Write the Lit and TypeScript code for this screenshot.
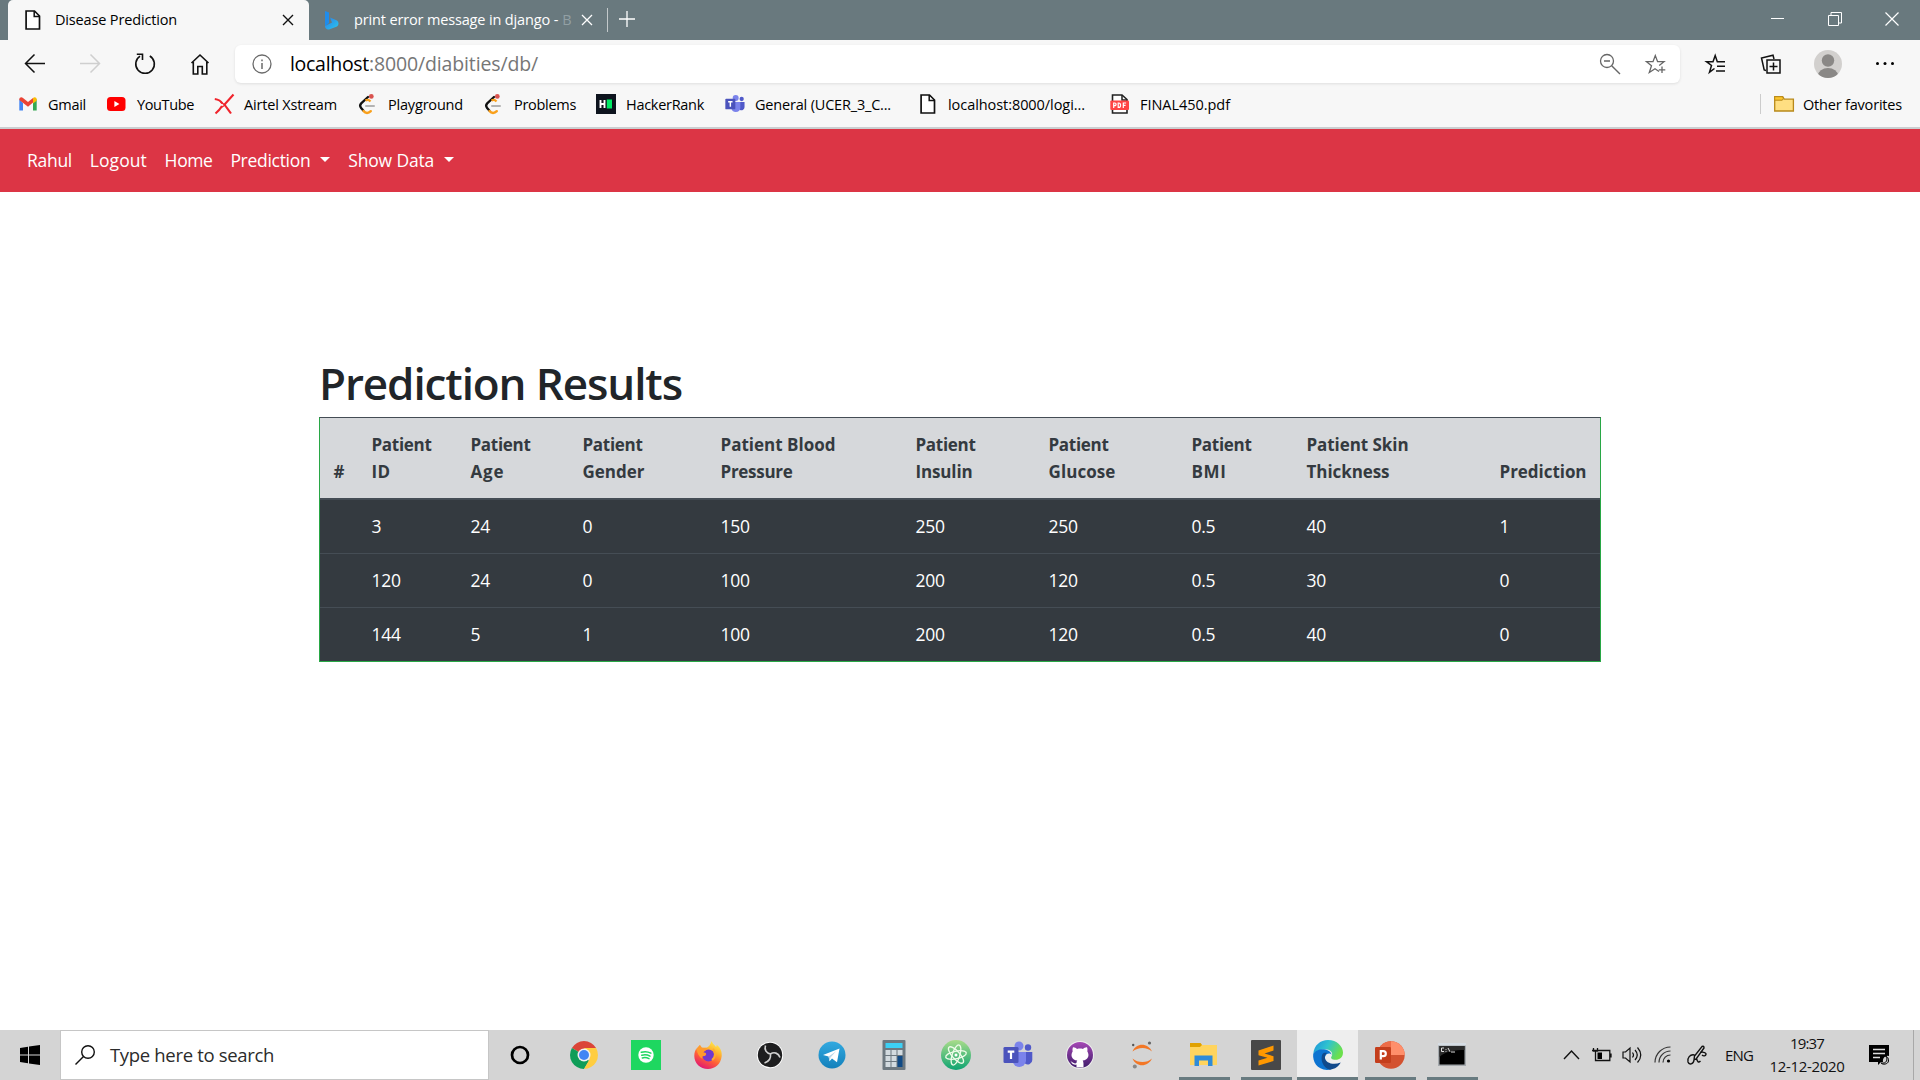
import { LitElement, html, svg, css } from "lit";
import { customElement } from "lit/decorators.js";

const icon = (w: number, h: number, body: unknown, vb?: string) =>
  html`<svg class="ico" width=${w} height=${h} viewBox=${vb ?? `0 0 ${w} ${h}`}>${body}</svg>`;

// Text set to a known advance width through letter spacing.
const fit = (text: string, w: number, cls = "") =>
  html`<span class="fit ${cls}" data-w=${w}>${text}</span>`;

const fileIcon = () =>
  icon(20, 20, svg`<path d="M3.100 1h8.400l5 5v13H3.100z" fill="#fff" stroke="#111" stroke-width="1.700"/><path d="M11.200 1v5.400h5.300" fill="none" stroke="#111" stroke-width="1.500"/>`);

const leetIcon = () =>
  icon(20, 20, svg`<path d="M10 3 3.200 9.400c-1.300 1.400-1.300 3.200-.1 4.600l2.200 2.600" fill="none" stroke="#111" stroke-width="2.300" stroke-linecap="round"/><path d="M5.500 17c2 2.600 5 2.600 7.300.2" fill="none" stroke="#f9a01b" stroke-width="2.400" stroke-linecap="round"/><path d="M7.500 6.500c1.600-1 3.400-.9 5 .9" fill="none" stroke="#f9a01b" stroke-width="2.200"/><path d="M8 12h8" stroke="#b3b3b3" stroke-width="2" stroke-linecap="round"/><circle cx="13.300" cy="2.400" r="2.400" fill="#d9534f"/>`);

const teams = (s: number) =>
  icon(s, s, svg`<circle cx="25" cy="7.500" r="3.200" fill="#5059c9"/><path d="M22 12h7.300v8a4.500 4.500 0 0 1-7.300 3.500z" fill="#5059c9"/><circle cx="16" cy="6" r="4.500" fill="#7b83eb"/><path d="M9.500 12h13.500v9a6.800 6.800 0 0 1-13.500 0z" fill="#7b83eb"/><rect x=".5" y="7" width="15" height="16" rx="1.300" fill="#4b53bc"/><path d="M4.700 11.700h6.600M8 11.700v7.300" stroke="#fff" stroke-width="2.200"/>`, "0 0 30 30");

const bookmarks = [
  { w: 89, tw: 37, t: "Gmail", i: icon(20, 20, svg`<path d="M1.300 5v11.600H5V9z" fill="#4285f4"/><path d="M15 9v7.600h3.700V5z" fill="#34a853"/><path d="M1.300 5.500C1.300 3.500 3.500 2.700 5 4l5 3.900L15 4l0 4.600-5 4.100-8.700-6.600z" fill="#ea4335"/><path d="M15 4c1.500-1.300 3.700-.5 3.700 1.500v1.300L15 9.500z" fill="#fbbc04"/>`) },
  { w: 107, tw: 56, t: "YouTube", i: icon(20, 20, svg`<rect x="0" y="3" width="18.500" height="14" rx="3.500" fill="#f00"/><path d="M7.400 7v6l5-3z" fill="#fff"/>`) },
  { w: 144, tw: 92, t: "Airtel Xstream", i: icon(20, 20, svg`<path d="M19.500.5 10.500 10.500C13 14 15 16.500 17 19.500M.8 5C4.500 5.500 7 7 8.300 9.500M1.500 19.500C4.500 17 6.500 14.500 8 12" fill="none" stroke="#f0242c" stroke-width="2.100"/><path d="m6.500 8 4.500 3-4.500 3" fill="none" stroke="#f0242c" stroke-width="1.500"/>`) },
  { w: 126, tw: 74, t: "Playground", i: leetIcon() },
  { w: 112, tw: 61, t: "Problems", i: leetIcon() },
  { w: 129, tw: 77, t: "HackerRank", i: icon(20, 20, svg`<rect width="20" height="20" fill="#0e141e"/><path d="M4.500 6v8M8.500 6v8M4.500 10h4" stroke="#fff" stroke-width="1.900"/><rect x="10.800" y="5.500" width="5.200" height="9" fill="#00ea64"/>`) },
  { w: 193, tw: 135, t: "General (UCER_3_C...", i: teams(20) },
  { w: 192, tw: 136, t: "localhost:8000/logi...", i: fileIcon() },
  { w: 150, tw: 89, t: "FINAL450.pdf", i: icon(20, 20, svg`<path d="M2.500 1h9.500l5 4.500V19H2.500z" fill="#fff" stroke="#222" stroke-width="1.600"/><path d="M12 1v5h5" fill="none" stroke="#222" stroke-width="1.500"/><rect x=".3" y="6.500" width="18.700" height="9.500" rx="1" fill="#f44"/><path d="M3.700 14V9h1.100a1.300 1.300 0 0 1 0 2.600H3.700M8.200 9h.7c2.200 0 2.200 4.400 0 4.400h-.7zM13.300 14V9h2.800M13.300 11.400h2.300" fill="none" stroke="#fff" stroke-width="1.200"/>`) },
];

const columns: { x: number; lines: [string, number][] }[] = [
  { x: 38, lines: [["#", 10]] },
  { x: 99, lines: [["Patient", 59], ["ID", 18]] },
  { x: 112, lines: [["Patient", 59], ["Age", 33]] },
  { x: 138, lines: [["Patient", 59], ["Gender", 61]] },
  { x: 195, lines: [["Patient Blood", 114], ["Pressure", 71]] },
  { x: 133, lines: [["Patient", 59], ["Insulin", 56]] },
  { x: 143, lines: [["Patient", 59], ["Glucose", 66]] },
  { x: 115, lines: [["Patient", 59], ["BMI", 34]] },
  { x: 193, lines: [["Patient Skin", 101], ["Thickness", 82]] },
  { x: 90, lines: [["Prediction", 86]] },
];

const rows = [
  ["", "3", "24", "0", "150", "250", "250", "0.5", "40", "1"],
  ["", "120", "24", "0", "100", "200", "120", "0.5", "30", "0"],
  ["", "144", "5", "1", "100", "200", "120", "0.5", "40", "0"],
];

const apps: { i: unknown; state?: string }[] = [
  { i: icon(30, 30, svg`<circle cx="15" cy="15" r="8" fill="none" stroke="#000" stroke-width="2.700"/>`) },
  { i: icon(30, 30, svg`<path d="M15 15 2.900 8A14 14 0 0 1 27.100 8z" fill="#db4437"/><path d="M15 15 2.900 8A14 14 0 0 0 15 29l5-8z" fill="#0f9d58"/><path d="M15 8h12.100A14 14 0 0 1 15 29l6-10.500z" fill="#ffcd40"/><circle cx="15" cy="15" r="6.500" fill="#f1f1f1"/><circle cx="15" cy="15" r="5" fill="#4285f4"/>`) },
  { i: icon(30, 30, svg`<rect width="30" height="30" fill="#1ed760"/><circle cx="15" cy="15" r="7.700" fill="#fff"/><path d="M10.300 12.300c3-1 6.800-.7 9.600.9M10.800 15.200c2.700-.8 5.800-.5 8.200.9M11.300 17.900c2.300-.6 4.700-.3 6.700.8" fill="none" stroke="#1ed760" stroke-width="1.500" stroke-linecap="round"/>`) },
  { i: icon(30, 30, svg`<defs><linearGradient id="ff" x1=".8" y1="0" x2=".3" y2="1"><stop offset="0" stop-color="#fff44f"/><stop offset=".35" stop-color="#ffb02e"/><stop offset=".65" stop-color="#ff5c38"/><stop offset="1" stop-color="#e01576"/></linearGradient></defs><path d="M18.500 1c1 3 3 3.500 4.500 6 .7-1 .7-1.500.6-2.300C28 8 29 12 28.700 16 28 24 22 29 15 29 7 29 1.300 23 1.300 16c0-3.500 1-6 2.200-7.500L4 10C4.500 8 5.500 6 7 5c0 1.200.5 2 1.200 2.700L14 7.500c2-1 3.500-3 4.500-6.500z" fill="url(#ff)"/><circle cx="15.500" cy="15.500" r="6" fill="#7139cf"/><path d="M3.500 8.500 7 5l2 2.700 5.500.8c-.5 1.800-3.500 2.300-4.300 4C13 12 14 14 12.500 15.500 10 17 8.500 15 9.500 19 6 17 4 13 3.500 8.500z" fill="#ff9a2e"/><path d="M20 9c2.500 3 3 8-1 11" fill="none" stroke="#ffab2e" stroke-width="2"/>`) },
  { i: icon(30, 30, svg`<circle cx="15" cy="15" r="13.200" fill="#fff"/><circle cx="15" cy="15" r="12.200" fill="#1e1e1f"/><path d="M10.500 5.500c-1.500 4.500 1 7.500 5 8.500M15.500 14c.5 4-1.500 7.500-6 9M15.500 14c3.500-2.500 8-1 9.500 3.500" fill="none" stroke="#d0d0d0" stroke-width="1.600"/>`) },
  { i: icon(30, 30, svg`<defs><linearGradient id="tg" x2="0" y2="1"><stop stop-color="#32a9e0"/><stop offset="1" stop-color="#1380bb"/></linearGradient></defs><circle cx="15" cy="15" r="13.500" fill="url(#tg)"/><path d="M6 15 22.500 8.500 20 22.300l-5-3.700-2.500 2.600-.9-4.700z" fill="#fff"/><path d="m11.600 16.500 7.500-5.200-5.600 6.300-1 3.600z" fill="#b9d6e8"/>`) },
  { i: icon(30, 30, svg`<rect x="3.500" width="23" height="30" rx="1" fill="#6d7880"/><rect x="6.500" y="3" width="17" height="5" fill="#3cd0f5"/><path d="M6.500 10h5v5h-5zM12.500 10h5v5h-5zM18.500 10h5v5h-5zM6.500 16h5v5h-5zM12.500 16h5v5h-5zM6.500 22h5v5h-5zM12.500 22h5v5h-5z" fill="#d3dbe0"/><path d="M18.500 16h5v11h-5z" fill="#104a86"/>`) },
  { i: icon(30, 30, svg`<defs><linearGradient id="at" x2="0" y2="1"><stop stop-color="#a9dc8a"/><stop offset="1" stop-color="#0ea472"/></linearGradient></defs><circle cx="15" cy="15" r="15" fill="url(#at)"/><g fill="none" stroke="#eefbe9" stroke-width="1.300"><ellipse cx="15" cy="15" rx="10.500" ry="3.800" transform="rotate(-12 15 15)"/><ellipse cx="15" cy="15" rx="10.500" ry="3.800" transform="rotate(48 15 15)"/><ellipse cx="15" cy="15" rx="10.500" ry="3.800" transform="rotate(108 15 15)"/></g><circle cx="15" cy="15" r="1.500" fill="#fff"/>`) },
  { i: teams(30) },
  { i: icon(30, 30, svg`<defs><linearGradient id="gh" x2="0" y2="1"><stop stop-color="#a548b5"/><stop offset="1" stop-color="#3f1c6b"/></linearGradient></defs><circle cx="15" cy="15" r="14" fill="#eee"/><circle cx="15" cy="15" r="13" fill="url(#gh)"/><path d="M8 7.300c1.500-.2 3 .8 4 1.600 2-.5 4-.5 6 0 1-.8 2.500-1.800 4-1.600.6 1.500.6 3 .3 4 2.700 4.500.7 8.700-4.600 9.300 1 1.500.8 4 .8 7h-7v-3c-4 1-4.500-2-6-3 2-.3 3 2.800 6 1.500 0-1 .3-2 .8-2.500-5.300-.6-7.300-4.800-4.600-9.300-.3-1-.3-2.500.3-4z" fill="#fff"/>`) },
  { i: icon(30, 30, svg`<path d="M5.500 11.500C9 2.500 21 2.500 25 11.500 20 6.800 11 6.800 5.500 11.500zM5.500 18.500c3.500 9 15.500 9 19.500 0-5 4.700-14 4.700-19.500 0z" fill="#f37726"/><circle cx="22.500" cy="3" r="1.600" fill="#666"/><circle cx="6.200" cy="5" r="1.200" fill="#555"/><circle cx="7.800" cy="26.500" r="2" fill="#888"/>`) },
  { state: "open", i: icon(30, 30, svg`<path d="M1 3h10.500l1.500 2h15v20H1z" fill="#ffd45e"/><path d="M1 3h10.500l1.500 2-2 2H1z" fill="#e0a100"/><path d="M5.500 26V15.500h18V26h-4.500v-5.500h-9V26z" fill="#2f8bd8"/>`) },
  { state: "open", i: icon(30, 30, svg`<rect width="30" height="30" rx="1" fill="#484848"/><path d="m7.500 10.500 15-5v5l-9 3 9 2.700v4.800l-15 4.500v-5l9-2.800-9-2.500z" fill="#ff9800"/>`) },
  { state: "active", i: icon(30, 30, svg`<defs><linearGradient id="eg" x2="1" y2=".4"><stop stop-color="#1c90dd"/><stop offset=".5" stop-color="#2fc3cf"/><stop offset="1" stop-color="#6be04c"/></linearGradient></defs><path d="M.3 14C1 5 7.500 0 15 0c9 0 15 6.500 15 12.500 0 5-3.500 7.300-7.300 7.300-4 0-5.200-1.500-4.300-3 2.600-4.300-1.400-7.600-6.400-7.600C6 9.200 1.500 12 .3 14z" fill="url(#eg)"/><path d="M.2 14C2 10.500 6.500 8.800 11 9.200c4 .3 7.500 3 7.500 5.500-1-2-5.500-2-6.500 2.300-1 5 4 10 9.500 10-2 2-4.500 3-7.500 3C4 29.500-.6 21.500.2 14z" fill="#0d74d1"/><path d="M9.500 14C7 19 9.500 28 17 29.800c5-.6 9-3.500 10.700-7.200C20 25.500 12.500 23 11.900 17.500c-.2-2 1-4 2.100-4.500-1.600-.6-3.500-.3-4.500 1z" fill="#114a8b"/>`) },
  { state: "open", i: icon(30, 30, svg`<circle cx="16" cy="15" r="13.700" fill="#d35230"/><path d="M16 1.300A13.700 13.700 0 0 1 29.700 15H16z" fill="#ff8f6b"/><path d="M16 1.300A13.700 13.700 0 0 0 2.300 15H16z" fill="#ed6c47"/><rect x="0" y="7" width="16" height="16" rx="1.200" fill="#c43e1c"/><path d="M5.800 19.500v-8.300h2.500a2.500 2.500 0 0 1 0 5H6" fill="none" stroke="#fff" stroke-width="2.200"/>`) },
  { state: "open", i: icon(30, 30, svg`<rect x="1" y="3" width="28" height="23" fill="#a4a9ad"/><rect x="1" y="3" width="28" height="2.500" fill="#d6dde4"/><rect x="2.500" y="6" width="25" height="18.500" fill="#000"/><path d="M2.500 6h25v4C18 10 8 11 2.500 17z" fill="#2b2b2b"/><path d="M7 8H4.500v3.500H7M9 9v.8M9 11v.8M11 8l2 3.800M14 12h4" stroke="#ddd" fill="none"/>`) },
];

@customElement("app-root")
export class AppRoot extends LitElement {
  static styles = css`
    :host { display: block; width: 1920px; height: 1080px; overflow: hidden; font-family: "Open Sans", "Noto Sans", sans-serif; color: #000; }
    * { box-sizing: border-box; }
    .screen { display: flex; flex-direction: column; height: 1080px; background: #fff; }
    .ico { display: block; flex: none; overflow: visible; }
    .fit { display: inline-block; white-space: nowrap; }
    .tabs { display: flex; align-items: center; height: 40px; background: #69797e; padding-left: 8px; font-size: 14.500px; }
    .tab { display: flex; align-items: center; width: 301px; height: 40px; background: #f7f7f7; border-radius: 5px 5px 0 0; padding: 0 0 0 15px; }
    .tab .title { flex: none; width: 239px; padding-left: 12px; margin-top: -2px; }
    .tab2 { display: flex; align-items: center; width: 298px; height: 40px; padding-left: 14px; color: #fff; }
    .tab2 .title { display: flex; flex: none; width: 232px; padding: 0 0 0 15px; white-space: nowrap; margin: -2px 10px 0 0; }
    .tab2 .fade { color: #92a0a4; }
    .vline { width: 1px; height: 24px; background: #c3c9cb; }
    .plus { margin: -2px 0 0 11px; }
    .wins { display: flex; gap: 43px; margin-left: auto; padding-right: 21px; margin-top: -3px; }
    .bar { display: flex; align-items: center; height: 47px; background: #f7f7f7; padding-left: 24px; }
    .navs { display: flex; gap: 33px; width: 211px; }
    .addr { display: flex; align-items: center; width: 1445px; height: 38px; background: #fff; border-radius: 6px; padding: 0 13px 0 17px; box-shadow: 0 1px 3px rgba(0,0,0,.1); font-size: 19.500px; }
    .url { flex: 1; padding-left: 18px; display: flex; margin-top: -1px; }
    .url .dim { color: #767676; }
    .addr .zoomout { margin-right: 24px; }
    .tools { display: flex; align-items: center; padding-left: 25px; }
    .marks { display: flex; align-items: center; height: 42px; background: #f7f7f7; border-bottom: 2px solid #cbced0; padding: 0 18px 6px 18px; font-size: 14.500px; }
    .mark { display: flex; align-items: center; gap: 10px; }
    .mark .fit, .other .fit { margin-top: 1px; }
    .other { display: flex; align-items: center; gap: 9px; margin-left: auto; border-left: 1px solid #ccc; padding-left: 13px; height: 20px; }
    .nav { display: flex; align-items: center; height: 63px; background: #dc3545; color: #fff; font-size: 17.500px; padding: 0 0 2px 27px; gap: 17.800px; }
    .drop { display: flex; align-items: center; gap: 10px; }
    .caret { border: 5.500px solid transparent; border-top-color: #fff; border-bottom: 0; }
    .main { flex: 1; padding: 164px 319px 0 319px; }
    h1 { margin: 0 0 7px; font-size: 44px; line-height: 54px; font-weight: 600; color: #212529; }
    .tbl { width: 1282px; border: 1px solid #28a745; border-top-color: #454d55; color: #fff; background: #343a40; font-size: 17.500px; }
    .thead { display: flex; align-items: flex-end; height: 82px; padding-left: 13.500px; padding-bottom: 13px; background: #d6d8db; color: #343a40; border-bottom: 2px solid #454d55; font-weight: 700; line-height: 27px; }
    .th { flex: none; display: flex; flex-direction: column; align-items: flex-start; font-size: 17px; }
    .tr { display: flex; align-items: center; height: 54px; padding: 0 0 2px 13.500px; border-bottom: 1px solid #454d55; letter-spacing: -.250px; }
    .tr:last-child { border-bottom: 0; height: 53px; }
    .td { flex: none; }
    .task { display: flex; height: 50px; background: #d4d4d4; }
    .start { display: flex; align-items: center; width: 60px; padding-left: 20px; }
    .search { display: flex; align-items: center; width: 429px; background: #fff; border: 1px solid #c6c6c6; padding-left: 14px; gap: 15px; font-size: 18.500px; color: #2b2b2b; }
    .search .fit { margin-top: -2px; }
    .apps { display: flex; }
    .app { display: flex; align-items: center; justify-content: center; width: 62px; height: 50px; border: solid transparent; border-width: 3px 0; position: relative; }
    .app:first-child { margin-right: 2px; }
    .app.open::after { content: ""; position: absolute; left: 6px; right: 5px; bottom: -3px; height: 3px; background: #687b80; }
    .app.active { background: #eee; width: 61px; margin-right: 1px; border-top-color: #eee; border-bottom-color: #687b80; }
    .tray { display: flex; align-items: center; margin-left: auto; width: 357px; color: #111; font-size: 15px; }
    .clock { display: flex; flex-direction: column; align-items: center; width: 76px; line-height: 23px; margin: 0 24px 0 15px; }
    .peek { width: 1px; height: 50px; background: #a8a8a8; margin-left: 24px; }
    .sp10 { margin-left: 10px; } .sp12 { margin-left: 12px; } .sp15 { margin-left: 15px; } .sp19 { margin-left: 18px; margin-right: 1px; }
    .sp33 { margin-left: 33px; } .sp32 { margin-left: 32px; }
  `;

  firstUpdated() {
    this.renderRoot.querySelectorAll<HTMLElement>(".fit").forEach((el) => {
      const target = Number(el.dataset.w);
      const n = (el.textContent ?? "").length;
      const natural = el.getBoundingClientRect().width;
      if (n > 0) el.style.letterSpacing = `${((target + 1 - natural) / n).toFixed(3)}px`;
    });
  }

  render() {
    return html`<div class="screen">
      <div class="tabs">
        <div class="tab">${fileIcon()}<div class="title">${fit("Disease Prediction", 121)}</div>${icon(12, 12, svg`<path d="m1 1 10 10M11 1 1 11" stroke="#111" stroke-width="1.400"/>`)}</div>
        <div class="tab2">${icon(16, 20, svg`<defs><linearGradient id="bg" x2="1" y2="1"><stop stop-color="#2a7de8"/><stop offset="1" stop-color="#2bc8ee"/></linearGradient></defs><path d="m2 1 4 1.500V13l-4 3.500z" fill="#1f8ceb"/><path d="M2 16 9 12.500 7 7.500l7 3c2 1.500 2 4.500 0 6L6 19.500c-2 .5-4-1-4-3.500z" fill="url(#bg)"/>`)}<div class="title">${fit("print error message in django", 195)}<span>&nbsp;-&nbsp;</span><span class="fade">B</span></div>${icon(12, 12, svg`<path d="m1 1 10 10M11 1 1 11" stroke="#fff" stroke-width="1.300"/>`)}</div>
        <div class="vline"></div>
        <div class="plus">${icon(16, 16, svg`<path d="M8 0v16M0 8h16" stroke="#fff" stroke-width="1.300"/>`)}</div>
        <div class="wins">${icon(14, 14, svg`<path d="M0 6.500h13" stroke="#fff"/>`)}${icon(14, 14, svg`<path d="M.5 3.500h10v10H.5zM3 3V.5h10.500V11H11" fill="none" stroke="#fff"/>`)}${icon(14, 14, svg`<path d="m.5.5 13 13M13.500.5l-13 13" stroke="#fff" stroke-width="1.200"/>`)}</div>
      </div>
      <div class="bar">
        <div class="navs">
          ${icon(22, 22, svg`<path d="M21 10.500H2M10.500 1.500 1.500 10.500l9 9" fill="none" stroke="#111" stroke-width="1.500"/>`)}
          ${icon(22, 22, svg`<path d="M1 10.500h19M11.500 1.500l9 9-9 9" fill="none" stroke="#cfcfcf" stroke-width="1.500"/>`)}
          ${icon(22, 22, svg`<path d="M6 3.200A9.300 9.300 0 1 0 15.800 3" fill="none" stroke="#111" stroke-width="1.600"/><path d="M2.800 1.300H8.500V7" fill="none" stroke="#111" stroke-width="1.600"/>`)}
          ${icon(22, 22, svg`<path d="M2.500 10 11 2l8.500 8M4.300 9v12h4.500v-7.500h4.500V21h4.500V9" fill="none" stroke="#111" stroke-width="1.600"/>`)}
        </div>
        <div class="addr">
          ${icon(20, 20, svg`<circle cx="10" cy="10" r="9" fill="none" stroke="#6b6b6b" stroke-width="1.300"/><path d="M10 9v6M10 5.500v1.700" stroke="#6b6b6b" stroke-width="1.500"/>`)}
          <div class="url">${fit("localhost", 78)}${fit(":8000/diabities/db/", 168, "dim")}</div>
          <div class="zoomout">${icon(22, 22, svg`<circle cx="8" cy="8" r="6.500" fill="none" stroke="#666" stroke-width="1.300"/><path d="M5 8h6M12.700 12.700 21 21" stroke="#666" stroke-width="1.400"/>`)}</div>
          ${icon(22, 22, svg`<path d="M14 18.500 10 15.800 4.300 19.500 6.500 12.700 1.500 8.700H8L10.300 2.500l2.300 6.200H19l-4.800 3.800M17 13.500v6.500M13.800 16.800h6.500" fill="none" stroke="#666" stroke-width="1.300"/>`)}
        </div>
        <div class="tools">
          ${icon(22, 22, svg`<path d="M9.500 15.500 4.500 19.200 6.500 12.500 1.500 8.700H8L10.200 2.500l2.100 6.200H20M12 13.200h8M11 18h9" fill="none" stroke="#111" stroke-width="1.500"/>`)}
          <div class="sp33">${icon(22, 22, svg`<path d="M7 7h13v13H7z" fill="none" stroke="#111" stroke-width="1.500"/><path d="M13.500 9.500v8M9.500 13.500h8M6 17.500 4.200 17 1.500 5 13 2.200 14 6" fill="none" stroke="#111" stroke-width="1.500"/>`)}</div>
          <div class="sp32">${icon(28, 28, svg`<defs><clipPath id="av"><circle cx="14" cy="14" r="14"/></clipPath></defs><circle cx="14" cy="14" r="14" fill="#d2d0ce"/><g clip-path="url(#av)" fill="#8a8886"><circle cx="14" cy="10.500" r="6.200"/><ellipse cx="14" cy="25.500" rx="10" ry="7.500"/></g>`)}</div>
          <div class="sp33">${icon(20, 20, svg`<circle cx="2.500" cy="9.500" r="1.500"/><circle cx="10" cy="9.500" r="1.500"/><circle cx="17.500" cy="9.500" r="1.500"/>`)}</div>
        </div>
      </div>
      <div class="marks">
        ${bookmarks.map((b) => html`<div class="mark" style="width:${b.w}px">${b.i}${fit(b.t, b.tw)}</div>`)}
        <div class="other">${icon(20, 20, svg`<path d="M.7 2.700h8l1.500 2.500h9.200V17H.7z" fill="#ffdf82" stroke="#b8891a" stroke-width="1.300"/><path d="M.7 2.700h8l.6 2-1 1.500H.7z" fill="#fcc62d" stroke="#b8891a"/>`)}${fit("Other favorites", 98)}</div>
      </div>
      <div class="nav">
        ${fit("Rahul", 44)}${fit("Logout", 56)}${fit("Home", 47)}
        <div class="drop">${fit("Prediction", 79)}<span class="caret"></span></div>
        <div class="drop">${fit("Show Data", 85)}<span class="caret"></span></div>
      </div>
      <div class="main">
        <h1>${fit("Prediction Results", 362)}</h1>
        <div class="tbl">
          <div class="thead">${columns.map((c) => html`<div class="th" style="width:${c.x}px">${c.lines.map(([t, w]) => fit(t, w))}</div>`)}</div>
          ${rows.map((r) => html`<div class="tr">${r.map((v, i) => html`<div class="td" style="width:${columns[i].x}px">${v}</div>`)}</div>`)}
        </div>
      </div>
      <div class="task">
        <div class="start">${icon(20, 20, svg`<path d="M0 3l8-1.200v7.700H0zM9 1.600 20 0v9.500H9zM0 10.500h8v7.700L0 17zM9 10.500h11V20L9 18.400z"/>`)}</div>
        <div class="search">${icon(20, 20, svg`<circle cx="13" cy="7" r="6.300" fill="none" stroke="#111" stroke-width="1.400"/><path d="M8.500 11.500.5 19.500" stroke="#111" stroke-width="1.500"/>`)}${fit("Type here to search", 163)}</div>
        <div class="apps">${apps.map((a) => html`<div class="app ${a.state ?? ""}">${a.i}</div>`)}</div>
        <div class="tray">
          ${icon(17, 12, svg`<path d="m1 10 7.500-8L16 10" fill="none" stroke="#111" stroke-width="1.400"/>`)}
          <div class="sp12">${icon(20, 16, svg`<path d="M5.500 3.500h12.300v10H3.500V8M19 6.500v4M1.500 1v3h4V1M3.500 4v4M0 3.500h6" fill="none" stroke="#111" stroke-width="1.300"/><path d="M5.500 5.500h4.500v6.500h-4.500z"/>`)}</div>
          <div class="sp10">${icon(20, 18, svg`<path d="M1 6v6h2.500L8 16V2L3.500 6zM10.500 6.500q2 2.500 0 5M13 4q4.500 5 0 10M15.500 1.500q6.500 7.500 0 15" fill="none" stroke="#111" stroke-width="1.200"/>`)}</div>
          <div class="sp12">${icon(18, 18, svg`<path d="M1 16.500A15.500 15.500 0 0 1 16.500 1M5 16.500A11.500 11.500 0 0 1 16.500 5M9 16.500A7.500 7.500 0 0 1 16.500 9" fill="none" stroke="#333" stroke-width="1.200"/><circle cx="14.500" cy="15" r="1.600"/>`)}</div>
          <div class="sp15">${icon(20, 20, svg`<path d="M7 15 7.500 11 15 1.500q2-1 2 1.500L9.500 13.500zM7.500 10C3 9 0 13 1 17c1 3 5.500 2.500 6-2M9.500 13.500c1 3.500 2 4.500 4 2.500M13 7.500c4-1 6.500.5 6 2s-2.500 2-4 .5" fill="none" stroke="#111" stroke-width="1.400"/>`)}</div>
          <div class="sp19">${fit("ENG", 27)}</div>
          <div class="clock">${fit("19:37", 33)}${fit("12-12-2020", 74)}</div>
          ${icon(20, 20, svg`<path d="M0 0h20v11a5 5 0 0 0-6 6h-2v0L9 20v-3H0z" fill="#000"/><path d="M4 4.500h12M4 8.500h12M4 12.500h7" stroke="#ddd" stroke-width="1.300"/><path d="M16.500 11c3 3.500 1 8-4.500 7 1.500 2 7 1.500 7.500-2 .2-2.500-1-4.500-3-5z" fill="#ccc" stroke="#000"/>`)}
          <div class="peek"></div>
        </div>
      </div>
    </div>`;
  }
}
